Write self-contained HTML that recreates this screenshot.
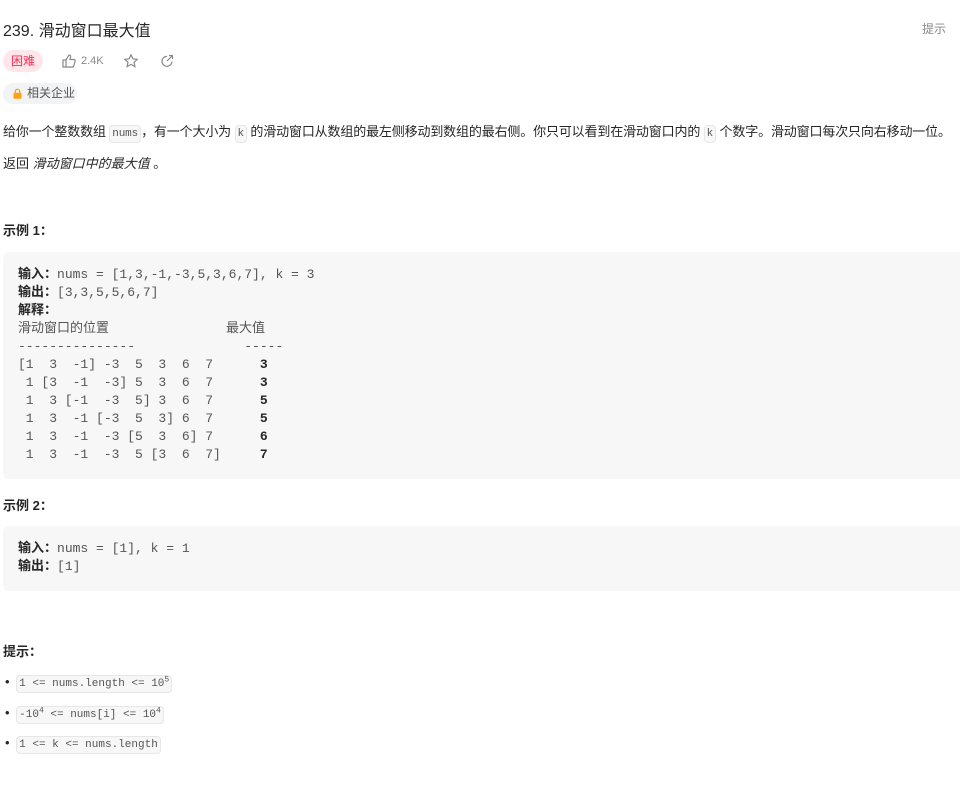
<!DOCTYPE html>
<html><head><meta charset="utf-8"><style>
body{margin:0;width:960px;height:787px;background:#fff;font-family:"Liberation Sans","Noto Sans CJK SC",sans-serif;color:#262626;overflow:hidden;position:relative}
.a{position:absolute;white-space:nowrap}
code{font-family:"Liberation Mono","Noto Sans CJK SC",monospace;font-size:11px;background:#f7f7f8;border:1px solid #e7e7e9;border-radius:4px;padding:2px 2px;color:#555}
pre{position:absolute;left:3px;width:980px;margin:0;background:#f7f7f7;border-radius:6px;font-family:"Liberation Mono","Noto Sans CJK SC",monospace;font-size:13px;line-height:18px;color:#555;padding:0 0 0 15px;box-sizing:border-box}
pre b{color:#262626;font-weight:bold}
.h{font-size:13px;font-weight:bold}
sup{font-size:8px}
</style></head><body>
<div class="a" style="left:3px;top:17px;font-size:16px;color:#262626">239. 滑动窗口最大值</div>
<div class="a" style="left:922px;top:20px;font-size:12px;color:#888">提示</div>
<div class="a" style="left:3px;top:50px;width:40px;height:22px;border-radius:11px;background:#ffe6ea;color:#ff2d55;font-size:12px;line-height:22px;text-align:center">困难</div>
<svg class="a" style="left:61px;top:53px" width="16" height="16" viewBox="0 0 16 16" fill="none" stroke="#888" stroke-width="1.2"><path d="M2 7h3v7H2zM5 7l3-5c1.2 0 1.8.8 1.6 2L9 6.5h4c.8 0 1.3.7 1.1 1.5l-1.3 5c-.2.6-.7 1-1.3 1H5"/></svg>
<div class="a" style="left:81px;top:55px;font-size:11px;color:#888">2.4K</div>
<svg class="a" style="left:123px;top:53px" width="16" height="16" viewBox="0 0 16 16" fill="none" stroke="#888" stroke-width="1.2"><path d="M8 1.8l1.9 4 4.3.5-3.2 3 .9 4.3L8 11.4 4.1 13.6 5 9.3 1.8 6.3l4.3-.5z"/></svg>
<svg class="a" style="left:159px;top:53px" width="16" height="16" viewBox="0 0 16 16" fill="none" stroke="#888" stroke-width="1.2"><path d="M13 8.5A5 5 0 1 1 8 3.3M10 2.5h3.5V6M13.5 2.5L8 8"/></svg>
<div class="a" style="left:3px;top:83px;width:74px;height:21px;border-radius:11px;background:#f2f3f4;font-size:12px;line-height:21px;color:#555">
<svg style="position:absolute;left:10px;top:5px" width="9" height="11" viewBox="0 0 9 11"><path d="M2.3 5V3.5a2.2 2.2 0 0 1 4.4 0V5" fill="none" stroke="#ffa116" stroke-width="1.3"/><rect x="0.5" y="4.8" width="8" height="6" rx="1" fill="#ffa116"/></svg>
<span style="position:absolute;left:24px">相关企业</span></div>
<div class="a" style="left:3px;top:121px;font-size:13px;letter-spacing:-0.15px">给你一个整数数组 <code>nums</code>，有一个大小为 <code>k</code> 的滑动窗口从数组的最左侧移动到数组的最右侧。你只可以看到在滑动窗口内的 <code>k</code> 个数字。滑动窗口每次只向右移动一位。</div>
<div class="a" style="left:3px;top:153px;font-size:13px">返回 <i>滑动窗口中的最大值 </i>。</div>
<div class="a h" style="left:3px;top:220px">示例 1：</div>
<pre style="top:252px;height:227px;padding-top:14px"><b>输入：</b>nums = [1,3,-1,-3,5,3,6,7], k = 3
<b>输出：</b>[3,3,5,5,6,7]
<b>解释：</b>
滑动窗口的位置               最大值
---------------              -----
[1  3  -1] -3  5  3  6  7      <b>3</b>
 1 [3  -1  -3] 5  3  6  7      <b>3</b>
 1  3 [-1  -3  5] 3  6  7      <b>5</b>
 1  3  -1 [-3  5  3] 6  7      <b>5</b>
 1  3  -1  -3 [5  3  6] 7      <b>6</b>
 1  3  -1  -3  5 [3  6  7]     <b>7</b></pre>
<div class="a h" style="left:3px;top:495px">示例 2：</div>
<pre style="top:526px;height:65px;padding-top:14px"><b>输入：</b>nums = [1], k = 1
<b>输出：</b>[1]</pre>
<div class="a h" style="left:3px;top:641px">提示：</div>
<div class="a" style="left:5px;top:674px;font-size:13px">• <code style="margin-left:3px">1 &lt;= nums.length &lt;= 10<sup>5</sup></code></div>
<div class="a" style="left:5px;top:705px;font-size:13px">• <code style="margin-left:3px">-10<sup>4</sup> &lt;= nums[i] &lt;= 10<sup>4</sup></code></div>
<div class="a" style="left:5px;top:735px;font-size:13px">• <code style="margin-left:3px">1 &lt;= k &lt;= nums.length</code></div>
</body></html>
